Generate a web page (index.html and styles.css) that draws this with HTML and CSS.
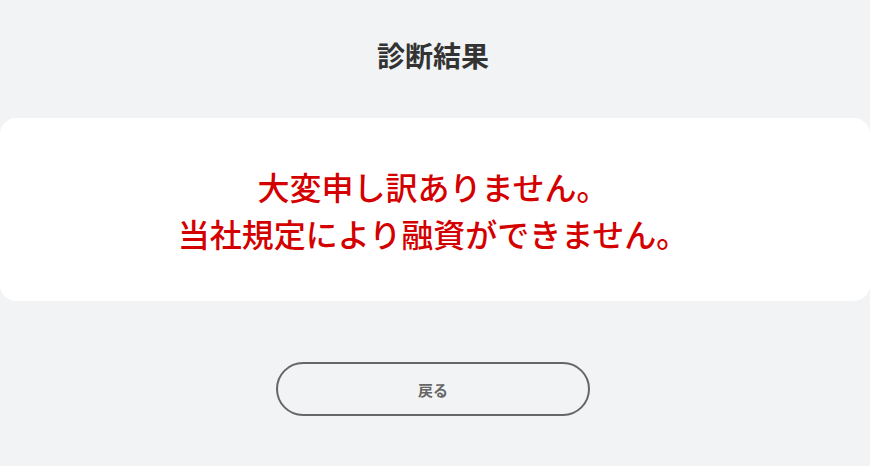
FILE: index.html
```html
<!DOCTYPE html>
<html lang="ja">
<head>
<meta charset="utf-8">
<link rel="stylesheet" href="styles.css">
</head>
<body>
<main class="page">
  <h1 class="title">診断結果</h1>
  <section class="card">
    <p class="message">大変申し訳ありません。<br>当社規定により融資ができません。</p>
  </section>
  <div class="actions">
    <button class="back" type="button">戻る</button>
  </div>
</main>
</body>
</html>
```
FILE: styles.css
```css
html, body {
  margin: 0;
  padding: 0;
  background: #f2f3f5;
  font-family: "Noto Sans CJK JP", "Noto Sans", sans-serif;
}
.page {
  width: 866px;
  padding-right: 4px;
  height: 466px;
  display: flex;
  flex-direction: column;
  align-items: center;
}
.title {
  margin: 35px 0 0;
  font-size: 28px;
  line-height: 40px;
  font-weight: 700;
  color: #333333;
}
.card {
  margin-top: 43px;
  margin-right: -4px;
  width: 870px;
  height: 183px;
  box-sizing: border-box;
  padding-right: 4px;
  background: #ffffff;
  border-radius: 16px;
  display: flex;
  align-items: center;
  justify-content: center;
}
.message {
  margin: 0;
  text-align: center;
  color: #d40000;
  font-size: 32px;
  line-height: 47px;
  font-weight: 500;
}
.actions {
  margin-top: 61px;
}
.back {
  width: 314px;
  height: 54px;
  border: 2px solid #666666;
  border-radius: 27px;
  background: transparent;
  color: #666666;
  font-family: "Noto Sans CJK JP", sans-serif;
  font-size: 15px;
  font-weight: 700;
  cursor: pointer;
}
```
